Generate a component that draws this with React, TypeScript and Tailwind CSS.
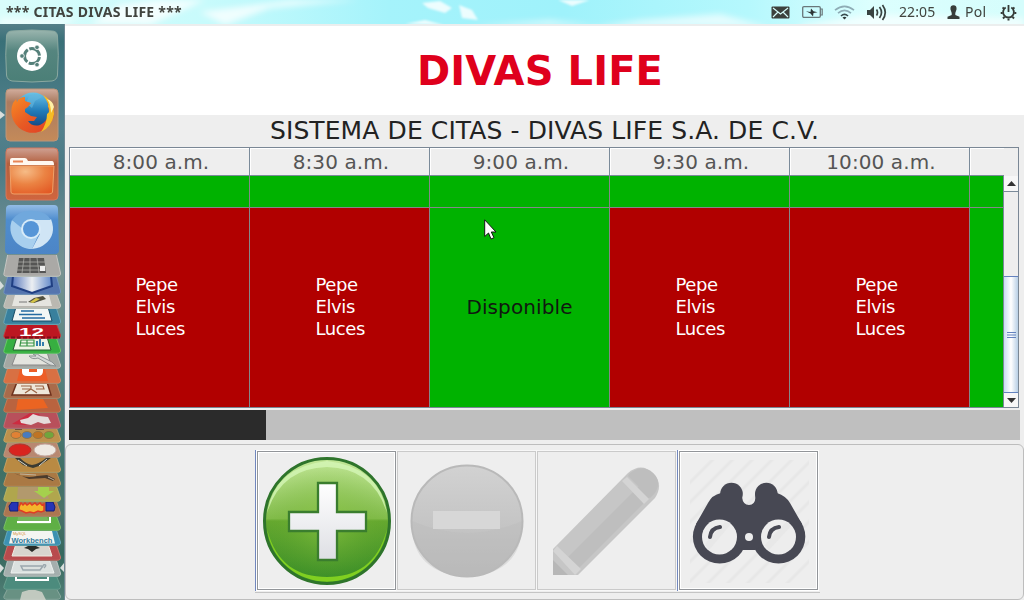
import type { ReactNode } from 'react';

const times = ['8:00 a.m.', '8:30 a.m.', '9:00 a.m.', '9:30 a.m.', '10:00 a.m.'];
const booked = [true, true, false, true, true];
const guests = ['Pepe', 'Elvis', 'Luces'];

function TopBar() {
  return (
    <header className="relative flex h-6 shrink-0 items-center justify-between overflow-hidden bg-[#c4fbfc] font-['Noto_Sans',sans-serif] text-[#41443f]">
      <svg className="absolute inset-0" width="1024" height="24" aria-hidden="true">
        <defs>
          <linearGradient id="sky">
            <stop offset="0" stopColor="#d9fdfb" />
            <stop offset=".2" stopColor="#c8fbfc" />
            <stop offset=".38" stopColor="#a5f3fb" />
            <stop offset=".55" stopColor="#9ff2fb" />
            <stop offset=".73" stopColor="#b5f8fd" />
            <stop offset=".85" stopColor="#dcfffe" />
            <stop offset="1" stopColor="#d5fdfc" />
          </linearGradient>
          <filter id="haze"><feGaussianBlur stdDeviation="3" /></filter>
          <filter id="soft"><feGaussianBlur stdDeviation="1" /></filter>
        </defs>
        <rect width="1024" height="24" fill="url(#sky)" />
        <g fill="#fff" filter="url(#haze)">
          <path d="M90 24 120 5 158 0H205L150 25ZM225 25 270 8 360 0H290L200 12Z" opacity=".75" />
          <path d="M590 27 640 20 720 14 770 27ZM800 25 870 15 1024 18V28H800Z" opacity=".65" />
          <path d="M0 18H80L60 26H0ZM470 26 550 20 600 26Z" opacity=".6" />
        </g>
        <g fill="#fff" filter="url(#soft)">
          <path d="M422 3 440 1 452 8 445 13 428 8ZM459 5 472 10 478 20 462 18ZM405 24 425 20 444 25ZM558 0 590 0 572 6Z" opacity=".8" />
        </g>
      </svg>
      <span className="relative pl-[6px] text-[14px] leading-6 font-bold tracking-[0.27px]">*** CITAS DIVAS LIFE ***</span>
      <div className="relative flex h-6 items-center pr-[7px]">
        <svg width="19" height="13" viewBox="0 0 19 13"><rect x=".5" y=".5" width="18" height="12" rx="1" fill="#3c403c" /><path d="m2 2 7.500 6L17 2M2 11l5-5m10 5-5-5" fill="none" stroke="#d6fbfa" strokeWidth="1.2" /></svg>
        <svg className="ml-[12px]" width="21" height="12" viewBox="0 0 21 12"><rect x=".7" y=".7" width="17.6" height="10.6" rx="1.2" fill="none" stroke="#69777a" strokeWidth="1.3" /><path d="M18.500 3h1.700v6h-1.700" fill="none" stroke="#69777a" strokeWidth="1.2" /><path d="M4 5.300 8.500 6l.500-3.500 2.500 2.800 4 .9-4 .8-.5 3.500L8.500 7.500Z" fill="#2e3636" /></svg>
        <svg className="ml-[11px]" width="21" height="15" viewBox="0 0 21 15" fill="none" strokeWidth="1.6"><path d="M1 5.200Q10.500-2.500 20 5.200M4 8.200Q10.500 2.600 17 8.200" stroke="#8eacb5" /><path d="M7 11Q10.500 7.600 14 11" stroke="#394a4d" /><path d="m8.500 12.500 2 2 2-2q-2-1.500-4 0Z" fill="#2e3636" /></svg>
        <svg className="ml-[11px]" width="21" height="17" viewBox="0 0 21 17" fill="none" stroke="#394341" strokeWidth="1.7"><path d="M1 6h3l4-4v13l-4-4H1Z" fill="#394341" stroke="none" /><path d="M10.500 5.500q2 3 0 6M13.500 3q4 5.500 0 11M16.500 1q5.500 7.500 0 15" /></svg>
        <span className="ml-[12px] w-[37px] text-[14px] leading-6 tracking-[0.1px] whitespace-nowrap">22:05</span>
        <svg className="ml-[11px]" width="13" height="14" viewBox="0 0 13 14"><path d="M3.500 4.500C3 1.800 4.300.3 6.500.3s3.500 1.500 3 4.200L8.300 8v2l4.200 1.800V14H.5v-2.200L4.700 10V8Z" fill="#383d3a" /></svg>
        <span className="ml-[5px] w-[23px] text-[14px] leading-6 tracking-[0.3px]">Pol</span>
        <svg className="ml-[12px]" width="17" height="17" viewBox="0 0 17 17" fill="none" stroke="#353b37"><path d="M5.700 3.500a5.400 5.400 0 1 0 5.600 0" strokeWidth="1.8" /><path d="M8.500 1v7" strokeWidth="1.8" /><path d="m2.500 3.500 1.700 1.200m10.300-1.200-1.700 1.200M.7 9h2m11.600 0h2M3 14.500l1.500-1.600M14 14.500l-1.500-1.600M8.500 14.500v2" strokeWidth="2" /></svg>
      </div>
    </header>
  );
}

function Slot({ y, h, children }: { y: number; h: number; children: ReactNode }) {
  return (
    <svg className="block shrink-0" width="64" height={h} viewBox={`0 ${y} 64 ${h}`}>
      {children}
    </svg>
  );
}

function Folded({ y, h, color, edge, children }: { y: number; h: number; color: string; edge: string; children?: ReactNode }) {
  const b = y + h;
  return (
    <Slot y={y} h={h}>
      <path d={`M8 ${y - 2}H56L60.500 ${b - 4}Q61 ${b - .7} 57 ${b - .7}H7Q3 ${b - .7} 4 ${b - 4}Z`} fill={color} stroke={edge} strokeWidth=".8" />
      {children}
    </Slot>
  );
}

function Launcher() {
  return (
    <nav className="flex w-[65px] shrink-0 flex-col overflow-hidden border-r border-[#6c8793] bg-[linear-gradient(180deg,#557f88_0%,#397078_3%,#53818d_18%,#4b7a85_25%,#668990_34%,#779391_43%,#56827f_60%,#3f7066_78%,#4b736a_84%,#36685e_92%,#517f76_100%)] pt-0.5">
      <svg width="0" height="0" className="absolute">
        <defs>
          <linearGradient id="teal" x2="0" y2="1"><stop stopColor="#9ab5ae" /><stop offset=".4" stopColor="#55857f" /><stop offset="1" stopColor="#4b7f77" /></linearGradient>
          <linearGradient id="tan" x2="0" y2="1"><stop stopColor="#d2ad9d" /><stop offset=".25" stopColor="#aa7b60" /><stop offset="1" stopColor="#c48a59" /></linearGradient>
          <linearGradient id="red-tile" x2="0" y2="1"><stop stopColor="#cfa193" /><stop offset=".3" stopColor="#b3603f" /><stop offset="1" stopColor="#d0653e" /></linearGradient>
          <radialGradient id="folder" cx=".35" cy=".2" r=".9"><stop stopColor="#f6bc87" /><stop offset=".5" stopColor="#eb8343" /><stop offset="1" stopColor="#e35a25" /></radialGradient>
          <linearGradient id="chrome" x2="0" y2="1"><stop stopColor="#93bce6" /><stop offset=".3" stopColor="#4f8dce" /><stop offset="1" stopColor="#4c85c6" /></linearGradient>
          <linearGradient id="fox" x2="1" y2="1"><stop stopColor="#f88b25" /><stop offset=".5" stopColor="#e85b24" /><stop offset="1" stopColor="#df3b27" /></linearGradient>
          <linearGradient id="globe" x2="0" y2="1"><stop stopColor="#6bc3e8" /><stop offset=".5" stopColor="#207bb8" /><stop offset="1" stopColor="#123e7a" /></linearGradient>
          <linearGradient id="shield"><stop stopColor="#5878bc" /><stop offset=".5" stopColor="#eceff2" /><stop offset="1" stopColor="#638aca" /></linearGradient>
        </defs>
      </svg>
      <Slot y={26} h={59}>
        <path d="M12 31Q32 29 52 31 57 31 57.500 36 59 55 57.500 75 57 80 52 81 32 83 12 81 7 80 6.500 75 5 55 6.500 36 7 31 12 31Z" fill="url(#teal)" stroke="#8ba9a1" />
        <circle cx="32" cy="56" r="15" fill="#fff" />
        <circle cx="32" cy="56" r="7.500" fill="none" stroke="#55807a" strokeWidth="3" strokeDasharray="14 1.700" strokeDashoffset="-1" />
        <g fill="#55807a" stroke="#fff" strokeWidth=".8"><circle cx="22" cy="56" r="2.300" /><circle cx="37" cy="47.300" r="2.300" /><circle cx="37" cy="64.700" r="2.300" /></g>
      </Slot>
      <Slot y={85} h={59}>
        <rect x="6" y="89" width="52" height="52" rx="4" fill="url(#tan)" stroke="#bd967b" />
        <path d="M0 111 5 115 0 119Z" fill="#d8dedc" />
        <circle cx="33" cy="111" r="18.500" fill="url(#globe)" />
        <path d="M29 96Q36 92 42 97L35 101 32 108 26 103Z" fill="#66b8dd" opacity=".6" />
        <path d="M13 103 16 99 17 102Q19 97 25 97L25 101 31 103 28 107 25 109 25 112 31 116 37 117 34 121 28 121Q32 127 40 125 48 121 49 112L47 98Q54 104 54 115A21.500 21.500 0 1 1 13 103Z" fill="url(#fox)" />
        <path d="M43 95Q54 101 54 114 52 127 41 132 47 123 47 114 51 112 48 106 50 105 43 95Z" fill="#f6bc25" />
        <path d="M47 99Q51 104 51 113L54 107Q53 101 47 99Z" fill="#fff0a6" />
      </Slot>
      <Slot y={144} h={59}>
        <rect x="6" y="148" width="52" height="52" rx="4" fill="url(#red-tile)" stroke="#d3775d" />
        <path d="M10 160Q10 158 12 158H25Q27 158 28 161H52Q54 161 54 165H10Z" fill="#fff8f0" />
        <rect x="13" y="160.500" width="10" height="2" fill="#e88556" />
        <path d="M10 166H54L52.500 192Q52 194 49 194H14Q11 194 11 192Z" fill="url(#folder)" stroke="#f0a168" />
      </Slot>
      <Slot y={203} h={52}>
        <path d="M10 205H54Q58 205 58 209L59 250Q59 254 55 254H9Q5 254 5 250L6 209Q6 205 10 205Z" fill="url(#chrome)" />
        <path d="M12 220A21 21 0 0 0 32 249L38 236Z" fill="#a8cfee" />
        <path d="M32 219H51Q57 235 45 244 41 248 32 249L40 234Z" fill="#d0e5f5" />
        <path d="M12 220Q20 209 35 211 47 212 51 220H31L24 230Z" fill="#70a8dd" />
        <circle cx="31" cy="229" r="10" fill="#d8ebf8" /><circle cx="31" cy="229" r="8" fill="#5695d7" />
      </Slot>
      <Folded y={255} h={22} color="#aaa9a6" edge="#d0cfcc">
        <path d="M19 258H44L46 273H17Z" fill="#555554" />
        <path d="M17 262H46M17 266H46M17 270H46M24 258 22 273M30 258V273M37 258 39 273" stroke="#aaaaa6" strokeWidth=".8" />
        <path d="M40 266H45V271H40Z" fill="#eee" />
      </Folded>
      <Folded y={277} h={18} color="#5575ae" edge="#7597c6">
        <path d="M0 281 4 286 0 290Z" fill="#d8dedc" />
        <path d="M13 276H51L52 286 32 293 12 286Z" fill="url(#shield)" stroke="#203f82" strokeWidth="2" />
      </Folded>
      <Folded y={295} h={14} color="#bab8b1" edge="#cfcfc9">
        <path d="M15 295H49L52 306H12Z" fill="#e5e4df" /><path d="m28 302 6-4 9-2 3 3-12 4Z" fill="#514f40" /><path d="m30 302 6-4 4 1-7 4Z" fill="#d4c448" /><path d="M19 302h8" stroke="#777" />
      </Folded>
      <Folded y={309} h={16} color="#39809d" edge="#72adc0">
        <path d="M16 307H48L52 321H12Z" fill="#f2f6f5" stroke="#174b65" /><path d="M21 311H34M19 314.500H42M22 318H45" stroke="#246aa1" strokeWidth="1.500" />
      </Folded>
      <Folded y={325} h={14} color="#bd1721" edge="#cd3b3b">
        <text x="19" y="335.500" fill="#fff" fontFamily="Liberation Sans" fontSize="11" fontWeight="bold" textLength="25" lengthAdjust="spacingAndGlyphs">12</text>
        <path d="M5 337.500H60" stroke="#830d1a" strokeWidth="2" strokeDasharray="4 2" />
      </Folded>
      <Folded y={339} h={15} color="#37af41" edge="#72d56c">
        <path d="M17 337H47L51 350H13Z" fill="#eef5e5" stroke="#275e31" /><path d="M21 340H34V346H20ZM20 343H34M27 340V346" fill="none" stroke="#379445" strokeWidth="1.200" /><path d="M37 346v-5m3 5v-7m3 7v-4" stroke="#347fad" strokeWidth="2" />
      </Folded>
      <Folded y={354} h={15} color="#a4a8a3" edge="#c7cbc6">
        <path d="M17 352H47L51 365H12Z" fill="#e4e4de" stroke="#888" /><path d="M29 356q3 4 9 2l12 7 6 1-4-4-12-6q-2-3-7-2l3 2Z" fill="#d6d9d8" stroke="#8c9293" />
      </Folded>
      <Folded y={369} h={15} color="#d87043" edge="#d88b66"><path d="M20 369H45L48 381H17Z" fill="#ed5d27" /><path d="M22 369V372Q22 376 27 376H38Q43 376 43 371V369H37V372H29V369Z" fill="#fff" /></Folded>
      <Folded y={384} h={15} color="#a96b4b" edge="#c39069"><path d="M17 382H47L51 395H12Z" fill="#eee7da" stroke="#6f321d" strokeWidth="1.500" /><path d="M21 386h10v3h-9m13-3h8l1 3h-8m-11 4 6-4 6 4" fill="none" stroke="#9a6444" strokeWidth="1.200" /></Folded>
      <Folded y={399} h={14} color="#b9633f" edge="#cb8158"><path d="M18 399H43L48 408 16 410Z" fill="#eb6422" /></Folded>
      <Folded y={413} h={16} color="#b8505b" edge="#ce7278"><path d="M12 424 30 413 40 414 25 425Z" fill="#cd2b40" /><path d="m20 420 8-2 5-4 6 2 9 1 3 6-7 1-6-2-7 3-10-2Z" fill="#e5dcdb" /></Folded>
      <Folded y={429} h={14} color="#bd914d" edge="#d0af6d">{['#e18135', '#487bbd', '#bf7424', '#71a53d'].map((c, i) => <ellipse key={c} cx={16 + i * 11} cy="435" rx="5" ry="3.500" fill={c} stroke="#977642" />)}<path d="M15 429h7m14 0h8" stroke="#75503b" strokeWidth="2" /></Folded>
      <Folded y={443} h={15} color="#b88870" edge="#c7a083"><ellipse cx="20" cy="450" rx="11" ry="6" fill="#d9241f" stroke="#a93930" /><ellipse cx="45" cy="450" rx="11" ry="6" fill="#eee9e2" stroke="#c4aaa0" /></Folded>
      <Folded y={458} h={15} color="#b98a43" edge="#d1a86a"><path d="M20 458Q26 464 32 465 39 464 46 458L51 458 39 466 33 468 23 465 15 458Z" fill="#3b3b32" /><path d="M18 460 27 466M47 459 39 466" stroke="#d9d8cd" /></Folded>
      <Folded y={473} h={14} color="#aa7944" edge="#c69b62"><path d="M14 473Q25 479 37 476L47 475 55 479 53 481 45 478 29 479Z" fill="#4b3b2c" /><path d="M20 474 36 475M48 477l6 3" stroke="#c2b39a" /></Folded>
      <Folded y={487} h={15} color="#b0a64d" edge="#c2bb69"><path d="M18 487H45L49 499H17Z" fill="#b2996d" /><path d="M38 487H49V491H54L44 498 34 491H38Z" fill="#a5d04d" /></Folded>
      <Folded y={502} h={15} color="#ac7651" edge="#c49067"><path d="M12 502H18V511H10L9 506Z" fill="#2734b6" stroke="#111f77" /><path d="M46 502H53L55 507 54 511H46Z" fill="#2734b6" stroke="#111f77" /><path d="m19 507 2-4 2 2 2-2 2 2 3-2 2 2 3-2 2 2 3-2 2 2 2-1v7l-3 1-3-1-4 2-4-1-4 1-4-2-3-1Z" fill="#f5b52c" stroke="#df3c24" strokeWidth="1.500" /></Folded>
      <Folded y={517} h={14} color="#5faf45" edge="#82c86b"><path d="M18 517H47L50 524H17Z" fill="#75b75c" /><path d="M17 522H50V517" fill="none" stroke="#fff" strokeWidth="2" /></Folded>
      <Folded y={531} h={15} color="#3c91b2" edge="#70b1c5"><path d="M12 531H52L55 543.500H9Z" fill="#f3f5f2" /><text x="13" y="535" fontFamily="Liberation Sans" fontSize="4" fill="#d69036">MySQL</text><text x="11.500" y="542.500" fontFamily="Liberation Sans" fontSize="7" fontWeight="bold" fill="#347c9c" textLength="41" lengthAdjust="spacingAndGlyphs">Workbench</text></Folded>
      <Folded y={546} h={15} color="#b84b4d" edge="#d7786e"><path d="M16 544H48L52 556H12Z" fill="#d8d5ce" stroke="#eee9df" /><path d="m24 548 4-2h8l4 2-4 1-4 3-4-3Z" fill="#292b27" /></Folded>
      <Folded y={561} h={16} color="#a4aead" edge="#c5cecb"><path d="M0 564 4 568 0 573ZM64 563 60 568 64 572Z" fill="#d8dedc" /><path d="M15 559H49L54 573H11Z" fill="#dbe1df" stroke="#edf0ee" /><path d="M21 566H43L40 570H23ZM43 565Q48 564 44 568" fill="none" stroke="#9aa7ad" strokeWidth="1.500" /></Folded>
      <Folded y={577} h={13} color="#4c8b7d" edge="#71a796"><path d="M16 577V580H48V577" fill="none" stroke="#fff" strokeWidth="2" /></Folded>
      <Folded y={590} h={10} color="#689183" edge="#93aea4"><path d="M20 600 22 592 32 589 42 592 46 600Z" fill="#d7d7ce" opacity=".8" /></Folded>
    </nav>
  );
}

function BodyCell({ isBooked }: { isBooked: boolean }) {
  return (
    <div className={`flex w-[180px] shrink-0 items-center justify-center border-r border-[#858789] pb-px ${isBooked ? 'bg-[#b10000] text-white' : 'bg-[#00b200] text-[#101810]'}`}>
      {isBooked ? (
        <div className="w-[48px] text-[18px] leading-[22px] tracking-[-0.4px]">
          {guests.map((guest) => <div key={guest}>{guest}</div>)}
        </div>
      ) : <span className="text-[20px] leading-[22px] tracking-[0.1px]">Disponible</span>}
    </div>
  );
}

function Schedule() {
  return (
    <section className="ml-1 h-[261px] w-[950px] border border-[#7a8795]">
      <div className="flex h-7 bg-[#eee]">
        {times.map((time) => (
          <div key={time} className="flex w-[180px] shrink-0 items-center justify-center border-r border-b border-[#7a8a99] pl-[3px] text-[20px] leading-7 tracking-[0.1px] text-[#555] shadow-[inset_1px_1px_0_white]">
            <span>{time}</span>
          </div>
        ))}
        <div className="w-[34px] border-b border-[#7a8a99] shadow-[inset_1px_1px_0_white]" />
      </div>
      <div className="flex h-[231px]">
        <div className="w-[933px] overflow-hidden">
          <div className="flex h-8 border-b border-[#858789] bg-[#00b200]">
            {times.map((time) => <div key={time} className="w-[180px] shrink-0 border-r border-[#858789]" />)}
          </div>
          <div className="flex h-[199px]">
            {booked.map((value, index) => <BodyCell key={times[index]} isBooked={value} />)}
            <div className="grow bg-[#00b200]" />
          </div>
        </div>
        <div className="flex w-[15px] flex-col border-l border-[#7a8a99] bg-[#eee]">
          <div className="flex h-4 items-center justify-center border-b border-[#7a8a99] bg-[#f7f7f7]"><svg width="9" height="5"><path d="M0 5 4.500 0 9 5Z" fill="#333" /></svg></div>
          <div className="h-[84px]" />
          <div className="flex h-[117px] items-center justify-center border-y border-[#6382bf] bg-linear-to-r from-[#c8dcf2] via-white to-[#b8cfe5]"><svg width="9" height="6"><path d="M0 .5h9M0 3h9M0 5.500h9" stroke="#6382bf" /></svg></div>
          <div className="flex grow items-center justify-center bg-[#f7f7f7]"><svg width="9" height="5"><path d="M0 0h9L4.500 5Z" fill="#333" /></svg></div>
        </div>
      </div>
    </section>
  );
}

function AddIcon() {
  return <svg width="130" height="130" viewBox="0 0 130 130"><defs><linearGradient id="add-fill" x2="0" y2="1"><stop stopColor="#c4e899" /><stop offset=".48" stopColor="#82bc4a" /><stop offset=".5" stopColor="#65a82f" /><stop offset="1" stopColor="#368c27" /></linearGradient><radialGradient id="add-light" cy=".52"><stop stopColor="#8ec844" stopOpacity=".65" /><stop offset="1" stopColor="#67a72e" stopOpacity="0" /></radialGradient><linearGradient id="plus-fill" x2="0" y2="1"><stop stopColor="#fff" /><stop offset="1" stopColor="#dedfe4" /></linearGradient></defs><circle cx="65" cy="65" r="62.500" fill="url(#add-fill)" /><circle cx="65" cy="65" r="60" fill="url(#add-light)" /><path d="M5 57Q12 11 65 5 118 11 125 57 111 12 65 11 19 12 5 57Z" fill="#d5f6b6" opacity=".8" /><path d="M5 73A60.500 60.500 0 0 0 125 73C116 108 94 121 65 121 36 121 14 108 5 73Z" fill="#80cf21" /><circle cx="65" cy="65" r="62.500" fill="none" stroke="#2e742b" strokeWidth="3" /><path d="M56 27H75V56H104V75H75V104H56V75H27V56H56Z" fill="url(#plus-fill)" stroke="#3a7d2e" strokeWidth="2.300" /></svg>;
}

function RemoveIcon() {
  return <svg width="116" height="116" viewBox="0 0 116 116"><defs><linearGradient id="remove-fill" x2="0" y2="1"><stop stopColor="#d2d2d2" /><stop offset="1" stopColor="#b9b9b9" /></linearGradient></defs><circle cx="58" cy="58" r="55.500" fill="url(#remove-fill)" stroke="#b9b9b9" strokeWidth="2" /><path d="M3 58Q31 70 58 70T113 58Q115 110 58 114 1 110 3 58Z" fill="#bbb" opacity=".35" /><path d="M24 48H91V66H24Z" fill="#d7d7d7" /></svg>;
}

function PencilIcon() {
  return <svg width="137" height="137" viewBox="538 452 137 137"><path d="M553 549 628 473Q641 462 653 473 664 484 655 498L578 575H553Z" fill="#c6c6c6" /><path d="m565 560 77-77 11 11-79 79Z" fill="#bebebe" /><path d="m622 481 5-4 22 22-5 5ZM553 551l4-5 24 23-6 6Z" fill="#d4d4d4" /><path d="m628 476 22 22 5-5q7-12-2-20-11-10-24 1Z" fill="#bebebe" /><path d="m553 560 15 15h-15Z" fill="#b7b7b7" /></svg>;
}

function BinocularsIcon() {
  return (
    <svg width="137" height="137" viewBox="680 452 137 137">
      <defs><pattern id="stripes" width="14" height="14" patternUnits="userSpaceOnUse" patternTransform="rotate(45)"><path d="M3 0V14" stroke="#e7e7e7" strokeWidth="3" /></pattern></defs>
      <path d="M690 473 706 460H809V573L797 583H690Z" fill="url(#stripes)" />
      <g fill="#474853">
        <circle cx="731.500" cy="494" r="11.300" /><circle cx="766.300" cy="494" r="11.300" />
        <circle cx="719.700" cy="536.700" r="26.800" /><circle cx="778.500" cy="536.700" r="26.800" /><circle cx="749" cy="537" r="11.500" />
        <path d="M696 524 708 503Q712 495 721 493H742V497Q743 505 749 505T755.500 497V493H777Q786 496 790 503L802 524 755 550H743Z" />
      </g>
      <circle cx="719.500" cy="537" r="17.500" fill="#ededed" /><circle cx="778.500" cy="537" r="17.500" fill="#ededed" /><circle cx="749" cy="537" r="4" fill="#ededed" />
      <path d="m705 544 20-22 6 2-22 26ZM765 545l21-23 5 4-22 24Z" fill="#e3e3e3" opacity=".5" />
      <path d="M710 537Q711 528 720 527M769 537Q770 528 779 527" fill="none" stroke="#474853" strokeWidth="4" strokeLinecap="round" />
      <path d="m737 561 12-13 13 13Z" fill="#eee" opacity="0" />
    </svg>
  );
}

function ActionButton({ label, disabled, children }: { label: string; disabled?: boolean; children: ReactNode }) {
  return (
    <button aria-label={label} disabled={disabled} className={`flex h-[139px] w-[139px] shrink-0 items-center justify-center border bg-[#eee] ${disabled ? 'border-[#cacaca] shadow-[0_0_0_1px_#f7f7f7]' : 'border-[#929599] shadow-[0_0_0_1px_white,inset_0_0_0_1px_white]'}`}>
      {children}
    </button>
  );
}

export default function App() {
  return (
    <div className="flex h-[600px] w-[1024px] flex-col overflow-hidden bg-[#eee] font-['DejaVu_Sans',sans-serif]">
      <TopBar />
      <div className="flex h-[576px]">
        <Launcher />
        <main className="flex w-[959px] flex-col border-t-2 border-[#ebeeee]">
          <div className="flex h-[89px] items-center justify-center bg-white pt-0.5 pr-[9px]"><h1 className="text-[40px] leading-[87px] font-bold tracking-[0.1px] text-[#df001c]">DIVAS LIFE</h1></div>
          <h2 className="h-8 w-full text-center text-[25px] leading-[31px] tracking-[0.1px] text-[#222]">SISTEMA DE CITAS - DIVAS LIFE S.A. DE C.V.</h2>
          <Schedule />
          <div className="mt-0.5 ml-1 h-[30px] w-[951px] bg-[#bfbfbf]"><div className="h-full w-[197px] bg-[#2b2b2b]" /></div>
          <section className="mt-1 flex h-[156px] w-[959px] rounded-md border border-[#bdbdbd] pt-[5px] pl-[189px]">
            <div className="flex h-[143px] w-[565px] items-start border-b border-[#c4c4c4] bg-[#eee]">
              <div className="flex h-[141px] w-[142px] border-l border-[#7187bd] pt-px pl-px"><ActionButton label="Agregar"><AddIcon /></ActionButton></div>
              <div className="flex h-[141px] w-[140px] pt-px"><ActionButton label="Eliminar" disabled><RemoveIcon /></ActionButton></div>
              <div className="flex h-[141px] w-[140px] pt-px"><ActionButton label="Editar" disabled><PencilIcon /></ActionButton></div>
              <div className="flex h-[141px] w-[142px] border-l border-[#7187bd] pt-px pl-px"><ActionButton label="Buscar"><BinocularsIcon /></ActionButton></div>
            </div>
          </section>
        </main>
      </div>
      <svg className="pointer-events-none absolute top-[219px] left-[484px]" width="13" height="21" viewBox="0 0 13 21"><path d="M.700.800V17.500L4.500 14 7 20 10 18.700 7.300 13H12Z" fill="#fff" stroke="#151515" /></svg>
    </div>
  );
}
